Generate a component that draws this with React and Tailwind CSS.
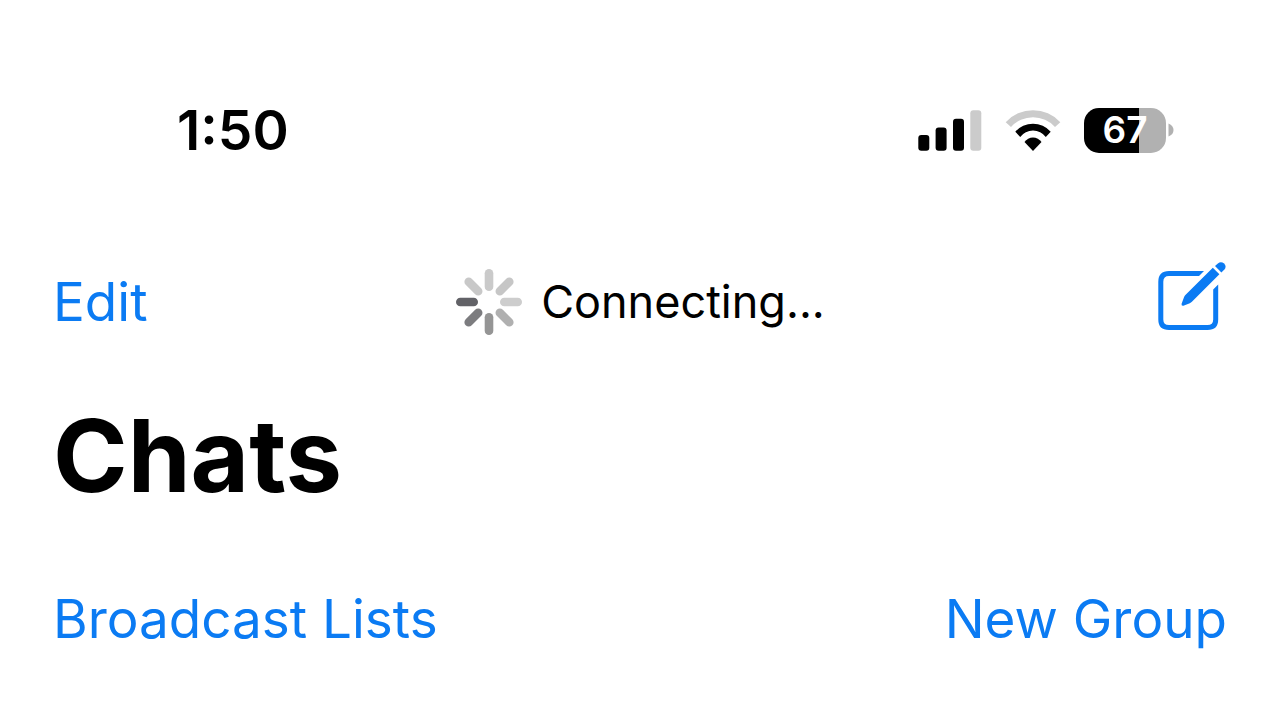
import React from "react";

const SPOKES = [
  { angle: 0, color: "#cacaca" },
  { angle: 45, color: "#c6c6c6" },
  { angle: 90, color: "#cdcdcd" },
  { angle: 135, color: "#b0b0b0" },
  { angle: 180, color: "#959595" },
  { angle: 225, color: "#7c7c7f" },
  { angle: 270, color: "#626267" },
  { angle: 315, color: "#c8c8c8" },
];

const SignalIcon = () => (
  <svg width="64" height="42" viewBox="0 0 64 42" role="img" aria-label="Signal">
    <rect x="0.3" y="26" width="11" height="15.7" rx="3" />
    <rect x="17.6" y="18.4" width="11" height="23.3" rx="3" />
    <rect x="35" y="9.7" width="11" height="32" rx="3" />
    <rect x="52.3" y="1.3" width="11" height="40.4" rx="3" fill="#cbcbcb" />
  </svg>
);

const WifiIcon = () => (
  <svg width="56" height="43" viewBox="0 0 56 43" role="img" aria-label="Wi-Fi">
    <path
      d="M0.7 13.2A37 37 0 0 1 55.3 13.2L50 17.9A30 30 0 0 0 6 17.9Z"
      fill="#cbcbcb"
    />
    <path d="M10.3 22.7A23.5 23.5 0 0 1 45.7 22.7L40.8 28A16 16 0 0 0 15.2 28Z" />
    <path d="M19.5 32.9A10.4 10.4 0 0 1 36.5 32.9L28 42Z" />
  </svg>
);

const Battery = () => (
  <div className="flex items-center gap-[2px]">
    <div className="flex h-[45px] w-[82px] items-center justify-center rounded-[15px] bg-[linear-gradient(to_right,#000_67%,#b1b1b1_67%)] text-[37px] font-semibold text-white">
      67
    </div>
    <svg width="6" height="14" viewBox="0 0 6 14" aria-hidden="true">
      <path d="M0.5 0.5Q5.5 2.5 5.5 7T0.5 13.5Z" fill="#b1b1b1" />
    </svg>
  </div>
);

const Spinner = () => (
  <svg width="68" height="68" viewBox="-34 -34 68 68" aria-hidden="true">
    {SPOKES.map(({ angle, color }) => (
      <rect
        key={angle}
        x="-4.3"
        y="-33"
        width="8.6"
        height="22"
        rx="4.3"
        fill={color}
        transform={`rotate(${angle})`}
      />
    ))}
  </svg>
);

const ComposeIcon = () => (
  <svg width="70" height="70" viewBox="0 0 70 70" fill="none" aria-hidden="true">
    <path
      d="M47 9H12Q1.3 9 1.3 19.7V57.5Q1.3 68 12 68H50.5Q61.2 68 61.2 57.5V22.5L56.2 27.5V57.5Q56.2 63 50.5 63H12Q6.3 63 6.3 57.5V19.7Q6.3 14 12 14H42Z"
      fill="currentColor"
    />
    <path
      d="M24.6 41.8L27 35.2Q27.5 34 28.4 33L55.8 5.8L62.4 12.3L34.9 39.8Q34 40.7 32.8 41.3L26.4 43.8Q24.1 44.2 24.6 41.8Z"
      fill="currentColor"
    />
    <path
      d="M58 4L60.9 1.4Q64 -0.9 67.1 1.6Q69.9 4.6 67.4 7.6L64.4 10.4Z"
      fill="currentColor"
    />
  </svg>
);

const App = () => {
  return (
    <main className="min-h-screen bg-white pt-[107px] font-['Inter',sans-serif] text-black">
      {/* Status bar */}
      <div className="flex h-[46px] items-center justify-between pr-[106px] pl-[177px]">
        <time className="text-[55px] font-semibold">1:50</time>
        <div className="flex items-center gap-[23px]">
          <SignalIcon />
          <WifiIcon />
          <Battery />
        </div>
      </div>

      {/* Navigation */}
      <header className="mt-[109px] grid h-20 grid-cols-[1fr_auto_1fr] items-center px-[53px] text-[#0b7bf3]">
        <button type="button" className="justify-self-start text-[53px] leading-[64px]">
          Edit
        </button>
        <div role="status" className="flex items-center gap-[18px] text-[45px] text-black">
          <Spinner />
          Connecting...
        </div>
        <button type="button" aria-label="New chat" className="self-start justify-self-end">
          <ComposeIcon />
        </button>
      </header>

      <h1 className="mt-[53px] px-[53px] text-[101px] leading-[120px] font-bold">Chats</h1>

      <div className="mt-[72px] flex items-center justify-between px-[53px] text-[53px] leading-[64px] text-[#0b7bf3]">
        <button type="button">Broadcast Lists</button>
        <button type="button">New Group</button>
      </div>
    </main>
  );
};

export default App;
